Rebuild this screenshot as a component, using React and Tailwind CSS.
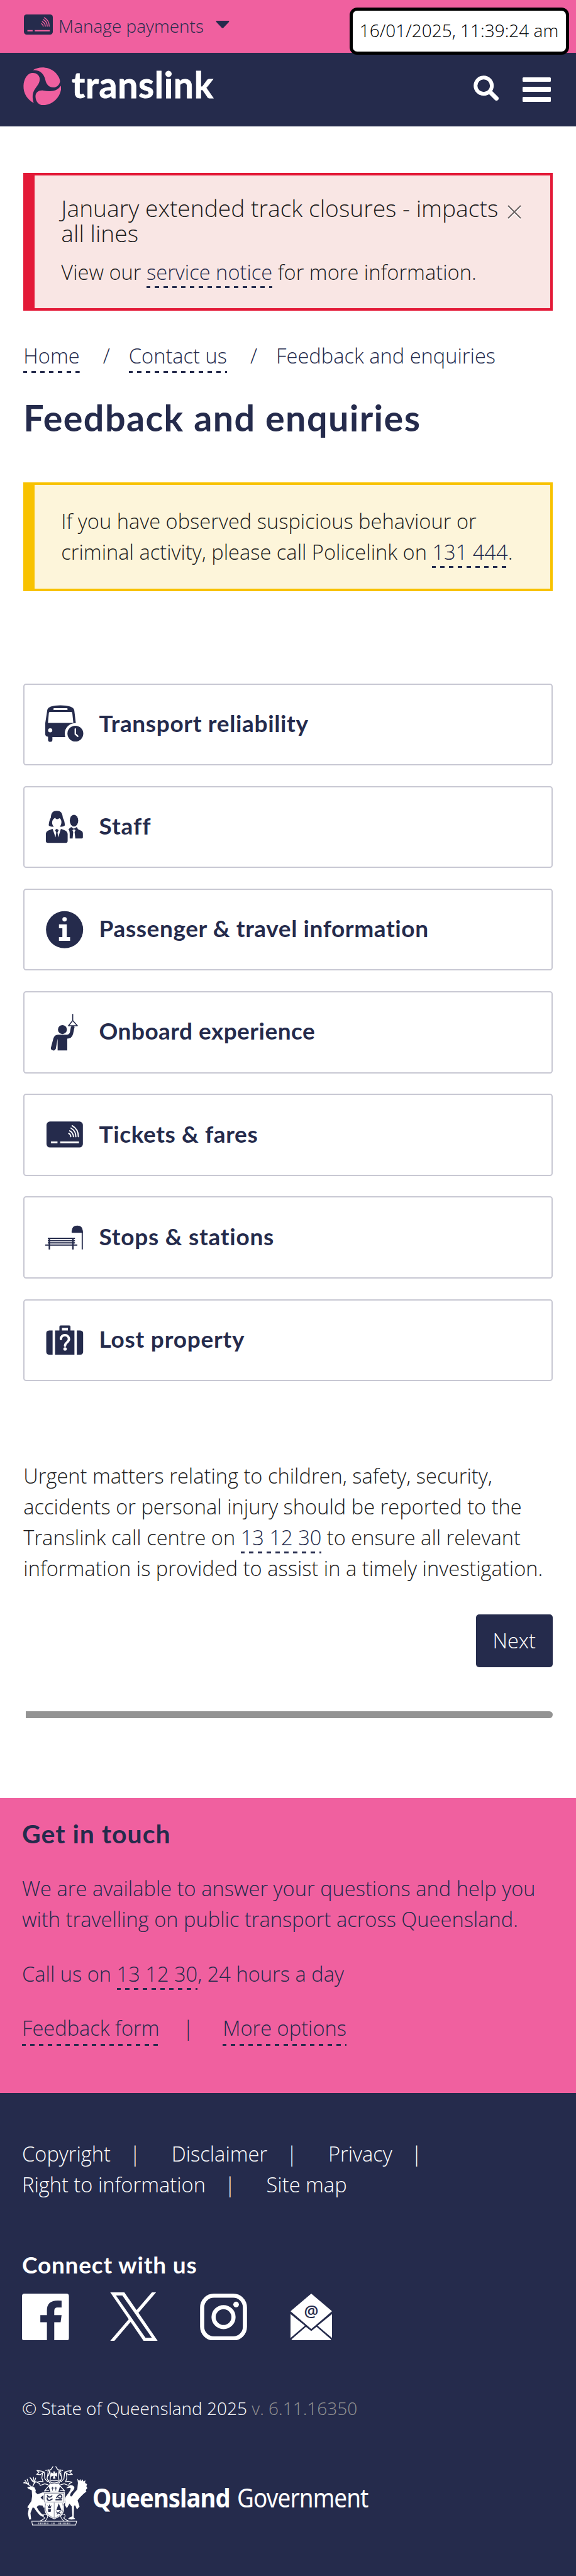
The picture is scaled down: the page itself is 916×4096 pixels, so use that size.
import React from "react";

const NAVY = "#252b4c";
const PINK = "#f0609f";

function DashLink({ children }) {
  return (
    <a className="text-[#252b4c] pb-[3px] bg-[repeating-linear-gradient(90deg,#252b4c_0_6px,transparent_6px_13px,#252b4c_13px_14px)] bg-[length:100%_3px] bg-bottom bg-no-repeat">
      {children}
    </a>
  );
}

function CardGlyph({ cut, ...rest }) {
  return (
    <svg {...rest} fill="none" stroke={cut} strokeWidth="2.4" strokeLinecap="round">
      <rect x="2.5" y="12" width="74.5" height="53" rx="7" fill={NAVY} stroke="none" />
      <path d="M55 20.5A25 25 0 0 1 67.6 43M52.5 25.5A20 20 0 0 1 62.6 43M50 31A14 14 0 0 1 57.6 43M48 36.2A8 8 0 0 1 52.3 43" />
      <path d="M11.5 54.7H25M30.5 54.7H69" strokeWidth="3.8" strokeLinecap="butt" />
    </svg>
  );
}

function Box({ children }) {
  return (
    <svg className="w-[60.6px] h-[60.6px] shrink-0" viewBox="0 0 78 78" fill={NAVY}>
      {children}
    </svg>
  );
}

const BusIcon = () => (
  <Box>
    <path
      fillRule="evenodd"
      d="M4 11C4.500 4 14 .5 31 .5S58.700 4 59.400 11L62.500 37A21.500 21.500 0 0 0 41 65.500H14.600V71A4.400 4.400 0 0 1 5.700 71V65C2 64.500 0 63 0 60V37ZM9.500 14.300Q7.500 14.300 7.300 16.500L5.500 36.800H57.500L55.300 16.500Q55 14.300 53 14.300ZM18 6.400A2 2 0 0 0 18 10.300H44.300A2 2 0 0 0 44.300 6.400Z"
    />
    <circle cx="10.100" cy="51.800" r="4.200" fill="#fff" />
    <circle cx="61.600" cy="58.600" r="16.200" />
    <path d="M61.500 49V59.500L66.500 64" fill="none" stroke="#fff" strokeWidth="3" strokeLinecap="round" />
  </Box>
);

const StaffIcon = () => (
  <Box>
    <path
      fillRule="evenodd"
      d="M23.500 5.500C14 5.500 12 11 11.500 19C8 25 7.500 31 7 35Q8 38 17.500 38C12 32 13 23 20.500 19.500Q21 23 25 22.500L29.500 20.500C34.500 24 34 33 29.800 38Q39 38 40 35C40 31 39 25 36 20C35 11 33 5.500 23.500 5.500Z"
    />
    <path d="M1.200 53C1.500 47 7 45 15 42.500L21 60L22.500 50L20 45L23.500 42L27.500 45L25 50L26.500 60L32 42.500C40 45 45.500 47 45.800 53V67Q45.800 71.200 42 71.200H5.500Q1.200 71.200 1.200 67Z" />
    <ellipse cx="58.800" cy="25.500" rx="8.700" ry="12" />
    <path d="M47.500 43L53 38.500L58.500 42L64.500 38.500L67 43L75 47Q77 49 77 52V60Q77 62 75 62H61.500L60 49L62 45L58.700 43L55.600 45L57.200 49L56 62H50V51Q50 46 47.500 43Z" />
  </Box>
);

const InfoIcon = () => (
  <Box>
    <circle cx="39.500" cy="39" r="38" />
    <circle cx="39.500" cy="17.700" r="4.500" fill="#fff" />
    <path fill="#fff" d="M28 28H44V54H50.800V61.700H28V54H35V36H28Z" />
  </Box>
);

const OnboardIcon = () => (
  <Box>
    <circle cx="35.100" cy="33.500" r="9.200" />
    <path d="M26 44H44Q49 44 50.500 39L52.500 28Q56 24.500 60 28L57 42Q54.500 52 45 52V76.400H25.300V52L21.500 73Q19.500 77 16 76.400Q11.500 75.500 11.300 71.500L16.500 52Q19 44 26 44Z" />
    <path d="M56.200 1.500V15L47.500 25.800H65.700L56.200 15" fill="none" stroke={NAVY} strokeWidth="2" strokeLinejoin="round" />
  </Box>
);

const TicketIcon = () => (
  <CardGlyph className="w-[60.6px] h-[60.6px] shrink-0" viewBox="0 0 78 78" cut="#fff" />
);

const BenchIcon = () => (
  <Box>
    <g stroke={NAVY} fill="none">
      <path strokeWidth="2.600" d="M5.200 41.300H60.800M5.200 45.900H60.800M5.200 50.400H60.800M0 55H65.600" />
      <path strokeWidth="3" d="M8.400 40V63.900M56.600 40V63.900" />
      <path strokeWidth="2.400" d="M75.700 28V63.900" />
    </g>
    <path d="M54 30V26Q55 15.200 65.500 15.200T77 26V30Z" />
  </Box>
);

const CaseIcon = () => (
  <Box>
    <path d="M15 18.700V68.300H8Q2 68 2 62V25Q2 19 8 18.700ZM64.600 18.700V68.300H71.500Q77.500 68 77.500 62V25Q77.500 19 71.500 18.700ZM20 18.700H59.700V68.300H20Z" />
    <path d="M31.500 20V11H49V20" fill="none" stroke={NAVY} strokeWidth="5.200" strokeLinejoin="round" />
    <path d="M32 36C32 25.500 48.500 26 48.500 36.500C48.500 43 40.500 43 40.500 50" fill="none" stroke="#fff" strokeWidth="5" strokeLinecap="round" />
    <circle cx="40.500" cy="56.500" r="3.500" fill="#fff" />
  </Box>
);

const CATEGORIES = [
  ["Transport reliability", BusIcon, "tracking-[0.65px]"],
  ["Staff", StaffIcon, "tracking-[0.9px]"],
  ["Passenger & travel information", InfoIcon, "tracking-[0.6px]"],
  ["Onboard experience", OnboardIcon, "tracking-[0.45px]"],
  ["Tickets & fares", TicketIcon, "tracking-[0.6px]"],
  ["Stops & stations", BenchIcon, "tracking-[0.75px]"],
  ["Lost property", CaseIcon, "tracking-[0.75px]"],
];

function Swirl() {
  return (
    <svg className="w-[60.6px] h-[60.6px]" viewBox="0 0 78 78" fill={PINK}>
      <path d="M19.200 6C31 -2 50 -2 63 8.500C73 17 76.500 27 74.800 31C73 38 67 41.500 61.500 41.300C52 41 47 34 45.500 27C43.500 17 37 4.500 19.200 6Z" />
      <path d="M16 12C24 10 32 14 33.500 22C35 32 28 38 23 46C18.500 54 18 62 21.400 73C8 66 0 53 .5 38C1 24 8 14 16 12Z" />
      <path d="M77.800 37C79 58 63 77.500 40 77.500C30 77.500 25 68 25 59C25.500 50 33 46.500 41 47.500C55 50 68 51 77.800 37Z" />
    </svg>
  );
}

function Crest() {
  return (
    <svg className="w-[102px] h-[94.6px] shrink-0" viewBox="54 46 394 366" fill="#fff">
      {/* stag */}
      <path d="M78 178L100 172L122 178L131 196L128 208L142 220L176 208L182 222L160 240L178 258L188 285L182 306L172 290L150 288L136 298L150 322L166 340L180 350L172 358L154 348L134 324L122 306L112 300L98 336L102 374L90 376L82 340L88 306L78 300L90 282L104 262L108 232L106 196L84 186Z" />
      <path d="M104 174L84 160L60 146M80 156L64 134M70 152L56 150M88 160L78 128M112 172L122 150L116 116M122 150L100 122M122 148L130 120M122 154L132 140M110 140L96 118" fill="none" stroke="#fff" strokeWidth="5" strokeLinecap="round" />
      {/* crane */}
      <path d="M318 182L342 164Q362 162 368 178Q370 190 352 206Q338 222 344 232Q352 238 362 218L386 190L390 150L386 124L398 138L404 126L410 140L418 128L424 142L436 134L434 150L446 158L442 172L448 182L438 194L442 204L424 218L400 242L388 258L400 296L384 314L374 290L366 290L364 362L374 372L350 376L328 372L340 362L356 356L352 296L338 278L322 306L310 288L312 266Q304 246 322 226Q344 198 346 184Q340 178 330 182Z" />
      {/* mantling and crest */}
      <g fill="none" stroke="#fff" strokeWidth="5" strokeLinejoin="round" strokeLinecap="round">
        <path d="M236 50L226 66L216 72L222 104L218 138M254 50L264 66L274 72L270 104L274 138M192 74L212 70L204 84M296 74L278 70L286 84M216 76L210 106M274 76L282 106" />
        <path d="M138 74L150 86L136 98L158 100L170 90L184 84L168 78ZM352 74L340 86L356 98L332 100L320 90L308 84L324 78Z" />
        <path d="M172 90L168 120L176 144L160 140L136 146L154 154L158 166L186 156L206 162M318 90L322 120L314 144L330 140L354 146L338 154L332 166L306 156L284 162" />
        <path d="M184 88L186 124L202 142L212 134M308 88L304 124L288 142L278 134M206 90L200 124L216 150M284 90L290 124L274 150" />
        <path d="M218 140Q244 128 272 140M218 152Q244 140 274 152M216 162L184 200L210 196M274 162L308 200L282 196" />
      </g>
      <path d="M238 80H250L248 92L262 86V112L248 106L252 124H236L240 106L224 112V86L240 92ZM218 158Q244 146 274 158L280 170L270 206H220L210 170Z" />
      <path d="M234 174V198M226 182H242M254 174V198M246 182H262" stroke={NAVY} strokeWidth="3.500" />
      {/* shield */}
      <path d="M178 208H310V272L302 280Q314 320 290 348Q268 366 244 374Q222 366 198 348Q176 320 188 280L178 272Z" />
      <path d="M184 214H304V268H184ZM192 276Q182 318 204 344Q224 360 244 368Q266 360 286 344Q306 318 296 276M244 272V366" fill="none" stroke={NAVY} strokeWidth="2" />
      <g fill="none" stroke={NAVY} strokeWidth="7">
        <path d="M200 226Q212 248 232 228M202 240Q196 258 216 258L234 248M252 254H292M258 244Q272 218 288 226Q298 244 280 244L268 240" />
      </g>
      <path d="M202 286L208 306H222L228 286L216 300ZM205 312H225L222 328H208ZM272 276L258 316L248 322Q268 310 290 322Z" fill={NAVY} />
      <path d="M256 328L284 342M282 324L260 344M215 284V304" stroke={NAVY} strokeWidth="5" />
      {/* motto ribbon */}
      <path d="M106 386H382L376 410H110ZM152 386Q176 378 186 366Q170 354 182 344Q202 340 204 358Q198 378 184 386M338 386Q312 378 302 366Q318 354 306 344Q286 340 284 358Q292 378 306 386" fill="none" stroke="#fff" strokeWidth="4" />
      <path d="M146 399H210M228 399H248M268 399H346" stroke="#fff" strokeWidth="9" strokeDasharray="4 3 2 3 6 4" opacity="0.75" />
    </svg>
  );
}

const HEAD = "font-[Lato,sans-serif] font-bold whitespace-nowrap";
const Bar = () => <span className="ml-[30px] mr-[49px]">|</span>;

export default function App() {
  return (
    <div className="w-[916px] h-[4096px] overflow-hidden bg-white font-['Open_Sans',sans-serif] font-light text-[32.63px] leading-[48.95px] text-[#1d1d1d]">
      <div className="relative flex h-[84px] items-start bg-[#f0609f] pl-[38px] text-[#252b4c]">
        <CardGlyph className="mt-[22.5px] h-[32px] w-[46px]" viewBox="2.5 12 74.5 53" preserveAspectRatio="none" cut={PINK} />
        <span className="ml-[9px] mt-[20px] text-[28px] leading-[42px] whitespace-nowrap">Manage payments</span>
        <svg className="ml-[19px] mt-[32.5px] h-[12px] w-[22px]" viewBox="0 0 22 12" fill={NAVY}>
          <path d="M1.500 0H20.500Q22 .5 21 2L12.500 11Q11 12.500 9.500 11L1 2Q0 .5 1.500 0Z" />
        </svg>
        <div className="absolute z-10 left-[555.500px] top-[11.500px] flex h-[75px] w-[349px] items-center justify-center rounded-[12px] border-[5px] border-black bg-white pb-[1px] text-[28px] text-black whitespace-nowrap">
          16/01/2025, 11:39:24 am
        </div>
      </div>

      <header className="flex h-[116.5px] items-start bg-[#252b4c] pl-[36.5px] pr-[40px]">
        <div className="mt-[22.500px]"><Swirl /></div>
        <span className="font-[Lato,sans-serif] font-bold ml-[17px] mt-[18px] text-[57px] leading-[64px] text-white tracking-[0.700px] [-webkit-text-stroke:0.8px_white]">translink</span>
        <svg className="ml-auto mt-[35.500px] h-[40px] w-[40px]" viewBox="0 0 40 40" fill="none" stroke="#fff">
          <circle cx="16.200" cy="16.200" r="13" strokeWidth="6" />
          <path d="M26.500 26.500L36.500 36.500" strokeWidth="7" strokeLinecap="round" />
        </svg>
        <div className="ml-[38px] mt-[38.500px] flex w-[45px] flex-col gap-[8px]">
          <i className="h-[7.800px] rounded-[1.500px] bg-white" />
          <i className="h-[7.800px] rounded-[1.500px] bg-white" />
          <i className="h-[7.800px] rounded-[1.500px] bg-white" />
        </div>
      </header>

      <main className="px-[37.300px] pt-[74.500px]">
        <section className="relative h-[219px] border-[4.700px] border-l-[18.600px] border-[#e31937] bg-[#f9e6e4] pl-[42px] pt-[31.500px]">
          <h2 className="text-[37.200px] leading-[40px] whitespace-nowrap">January extended track closures - impacts<br />all lines</h2>
          <p className="mt-[18px]">View our <DashLink>service notice</DashLink> for more information.</p>
          <svg className="absolute right-[45px] top-[45.500px] h-[24px] w-[24px]" viewBox="0 0 24 24" strokeWidth="2">
            <path d="M2 4L22 24M22 4L2 24" stroke="#fff" />
            <path d="M2 2L22 22M22 2L2 22" stroke="#6b6363" />
          </svg>
        </section>

        <nav className="mt-[47.500px] flex text-[#252b4c]">
          <DashLink>Home</DashLink>
          <span className="ml-[37px] mr-[30px]">/</span>
          <DashLink>Contact us</DashLink>
          <span className="ml-[37px] mr-[30px]">/</span>
          <span>Feedback and enquiries</span>
        </nav>

        <h1 className={HEAD + " mt-[38.400px] text-[57.500px] tracking-[1.400px] leading-[64px] text-[#252b4c]"}>Feedback and enquiries</h1>

        <section className="mt-[71.400px] h-[172.500px] border-[4.700px] border-l-[18.600px] border-[#f8c200] bg-[#fdf5da] pl-[42px] pt-[33.800px]">
          <p>If you have observed suspicious behaviour or<br />criminal activity, please call Policelink on <DashLink>131 444</DashLink>.</p>
        </section>

        <div className="mt-[146.800px] flex flex-col gap-[32.700px]">
          {CATEGORIES.map(([label, Icon, cls]) => (
            <div key={label} className="flex h-[130.500px] items-center rounded-[4.500px] border-2 border-[#c8c8d3] pl-[32.700px] text-[#252b4c]">
              <Icon />
              <span className={HEAD + " ml-[25px] pb-[4px] text-[37px] leading-[44px] " + cls}>{label}</span>
            </div>
          ))}
        </div>

        <p className="mt-[126.900px] whitespace-nowrap">
          Urgent matters relating to children, safety, security,<br />
          accidents or personal injury should be reported to the<br />
          Translink call centre on <DashLink>13 12 30</DashLink> to ensure all relevant<br />
          information is provided to assist in a timely investigation.
        </p>

        <button className="ml-auto mt-[48px] flex h-[84px] w-[122px] items-center justify-center rounded-[5px] bg-[#252b4c] pt-[1px] text-white">Next</button>
        <div className="ml-[4px] mt-[69.800px] h-[11.700px] rounded-r-[6px] bg-[#939393]" />
      </main>

      <section className="mt-[126.700px] h-[468.600px] bg-[#f0609f] pl-[35px] pt-[32.700px] text-[#252b4c]">
        <h2 className={HEAD + " text-[41px] tracking-[1px] leading-[48px]"}>Get in touch</h2>
        <p className="mt-[39.700px] whitespace-nowrap">We are available to answer your questions and help you<br />with travelling on public transport across Queensland.</p>
        <p className="mt-[37.200px]">Call us on <DashLink>13 12 30</DashLink>, 24 hours a day</p>
        <p className="mt-[37.400px] flex"><DashLink>Feedback form</DashLink><span className="ml-[37px] mr-[46px]">|</span><DashLink>More options</DashLink></p>
      </section>

      <footer className="h-[769px] bg-[#252b4c] pl-[35px] pt-[73px] text-white">
        <div className="flex">Copyright<Bar />Disclaimer<Bar />Privacy<Bar /></div>
        <div className="flex">Right to information<Bar />Site map</div>
        <h2 className={HEAD + " mt-[80.300px] text-[37px] tracking-[0.800px] leading-[44px]"}>Connect with us</h2>
        <div className="mt-[23.500px] flex h-[75px] items-center">
          <svg className="h-[74.600px] w-[74.600px]" viewBox="0 0 96 96" fill="#fff">
            <path fillRule="evenodd" d="M5 0H91Q96 0 96 5V91Q96 96 91 96H66V58.700H79L81 44H66V35Q66 28.300 73 28.300H81V14.600Q51 11 51 34V44H37.500V58.700H51V96H5Q0 96 0 91V5Q0 0 5 0Z" />
          </svg>
          <svg className="ml-[65px] h-[77px] w-[76px]" viewBox="0 0 1200 1227" fill="#fff">
            <path d="M714.163 519.284L1160.890 0H1055.030L667.137 450.887L357.328 0H0L468.492 681.821L0 1226.370H105.866L515.491 750.218L842.672 1226.370H1200L714.137 519.284H714.163ZM569.165 687.828L521.697 619.934L144.011 79.694H306.615L611.412 515.685L658.880 583.579L1055.080 1150.300H892.476L569.165 687.854V687.828Z" />
          </svg>
          <svg className="ml-[67.500px] h-[74.600px] w-[75px]" viewBox="0 0 96 96" fill="none" stroke="#fff" strokeWidth="8.500">
            <rect x="4.250" y="4.250" width="87.500" height="87.500" rx="24" />
            <circle cx="48" cy="48" r="20.400" />
            <circle cx="73.700" cy="22.300" r="5.800" fill="#fff" stroke="none" />
          </svg>
          <svg className="ml-[68.500px] h-[74.600px] w-[66px]" viewBox="0 0 85 96" fill="#fff">
            <path d="M42.500 0L85 36L42.500 72.500L0 36ZM0 41.700L29.500 65.700L0 90.700ZM85 41.700L55.500 65.700L85 90.700ZM31.500 68L42.500 76.700L53.500 68L83 93.500Q82 96 79 96H6Q3 96 2 93.500Z" />
            <text x="42.500" y="47" textAnchor="middle" fontFamily="Open Sans" fontWeight="600" fontSize="33" fill={NAVY}>@</text>
          </svg>
        </div>
        <p className="mt-[87px] text-[28px] leading-[42px]">© State of Queensland 2025 <span className="text-[#929292]">v. 6.11.16350</span></p>
        <div className="mt-[70.800px] flex pl-[2px] whitespace-nowrap">
          <Crest />
          <div className="ml-[8px] mt-[22px] flex font-['Noto_Sans',sans-serif] text-[41px] leading-[56px] tracking-[-1px]">
            <span className="w-[230px] origin-left scale-x-[0.932] font-bold">Queensland</span>
            <span className="origin-left scale-x-[0.9] font-normal">Government</span>
          </div>
        </div>
      </footer>
    </div>
  );
}
